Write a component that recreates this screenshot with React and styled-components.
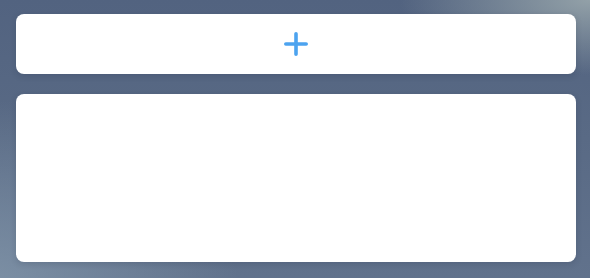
import React from "react";
import styled, { createGlobalStyle } from "styled-components";

const Global = createGlobalStyle`
  html, body {
    margin: 0;
    padding: 0;
    height: 100%;
  }
  #root {
    height: 100%;
  }
  body {
    font-family: "Noto Sans", sans-serif;
    background-color: #55657f;
    background-image:
      radial-gradient(ellipse 190px 75px at 590px 0px, rgba(150, 164, 170, 0.95), rgba(150, 164, 170, 0) 100%),
      radial-gradient(ellipse 260px 200px at -20px 300px, rgba(130, 150, 170, 0.9), rgba(130, 150, 170, 0) 100%),
      linear-gradient(180deg, #526380 0%, #596a85 50%, #61728c 100%);
  }
`;

const Page = styled.div`
  box-sizing: border-box;
  height: 278px;
  padding: 14px 14px 16px 16px;
  display: flex;
  flex-direction: column;
  gap: 20px;
`;

const Card = styled.div`
  background: #ffffff;
  border-radius: 8px;
  box-shadow: 0 2px 6px rgba(30, 40, 60, 0.18);
  height: ${(p) => p.$height}px;
  display: flex;
  align-items: center;
  justify-content: center;
`;

const AddButton = styled.button`
  border: 0;
  background: none;
  padding: 0;
  cursor: pointer;
  display: flex;
  align-items: center;
  justify-content: center;
  width: 26px;
  height: 26px;
  margin-left: -1px;
`;

function PlusIcon() {
  return (
    <svg width="24" height="24" viewBox="0 0 24 24">
      <path
        d="M12 1.8v20.4M1.8 12h20.4"
        stroke="#4ca3ef"
        strokeWidth="3.6"
        strokeLinecap="round"
        fill="none"
      />
    </svg>
  );
}

export default function App() {
  return (
    <>
      <Global />
      <Page>
        <Card $height={60}>
          <AddButton aria-label="Add">
            <PlusIcon />
          </AddButton>
        </Card>
        <Card $height={168} />
      </Page>
    </>
  );
}
